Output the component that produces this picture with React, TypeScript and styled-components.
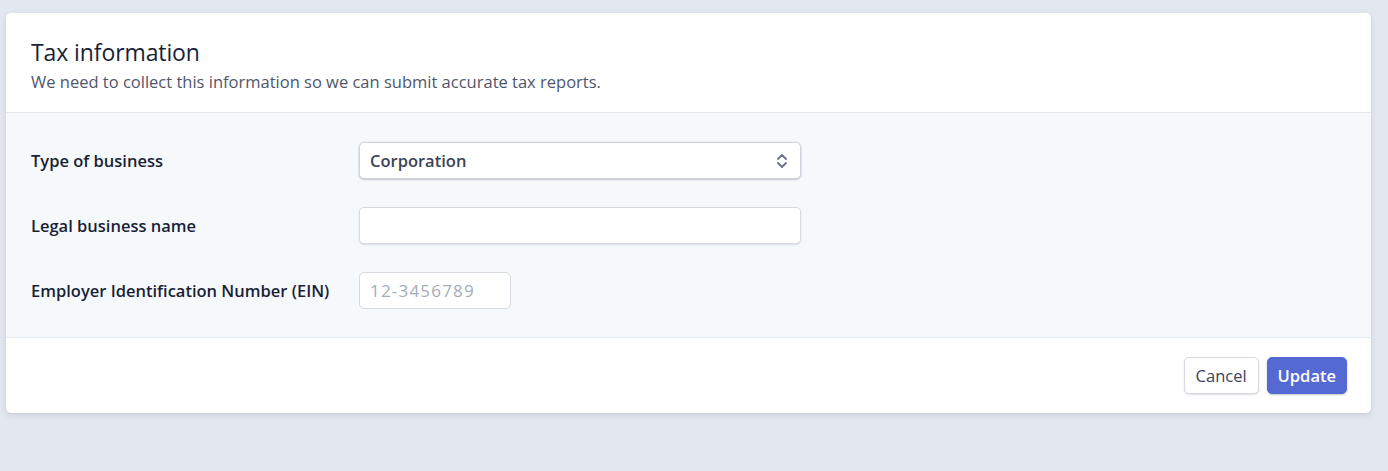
import React from 'react';
import styled, { createGlobalStyle } from 'styled-components';

const GlobalStyle = createGlobalStyle`
  html, body {
    margin: 0;
    padding: 0;
    background: #e3e7ef;
    font-family: "Open Sans", "Noto Sans", sans-serif;
    color: #1a1f36;
  }
`;

const Page = styled.div`
  padding: 13px 17px 58px 6px;
`;

const Card = styled.div`
  background: #ffffff;
  border-radius: 5px;
  box-shadow: 0 2px 6px rgba(60, 66, 87, 0.12), 0 1px 2px rgba(0, 0, 0, 0.06);
  overflow: hidden;
`;

const Header = styled.div`
  padding: 23px 25px 18px;
  border-bottom: 1px solid #e3e8ee;
`;

const Title = styled.h1`
  margin: 0;
  font-size: 23px;
  font-weight: 400;
  line-height: 32px;
  color: #1a1f36;
  letter-spacing: -0.1px;
`;

const Subtitle = styled.p`
  margin: 2px 0 0;
  font-size: 16.5px;
  line-height: 24px;
  color: #4f566b;
`;

const Body = styled.div`
  background: #f6f9fc;
  padding: 29px 25px 28px;
  display: flex;
  flex-direction: column;
  gap: 28px;
  border-bottom: 1px solid #e3e8ee;
`;

const Row = styled.div`
  display: grid;
  grid-template-columns: 328px 1fr;
  align-items: center;
`;

const Label = styled.label`
  font-size: 16.5px;
  font-weight: 600;
  color: #1a1f36;
`;

const Field = styled.div<{ $width: number }>`
  position: relative;
  width: ${p => p.$width}px;
  height: 37px;
  box-sizing: border-box;
  background: #ffffff;
  border: 1px solid #d5d9e0;
  border-radius: 5px;
  box-shadow: ${p => (p.$width > 400 ? '0 1px 2px rgba(60, 66, 87, 0.16)' : 'none')};
  display: flex;
  align-items: center;
`;

const SelectField = styled(Field)`
  box-shadow: 0 1px 2px rgba(60, 66, 87, 0.25), 0 0 0 1px rgba(60, 66, 87, 0.04);
  border-color: #cfd4dc;
`;

const Value = styled.span`
  padding-left: 10px;
  font-size: 16.5px;
  font-weight: 600;
  color: #3c4257;
  flex: 1;
`;

const TextInput = styled.input`
  border: none;
  outline: none;
  background: transparent;
  width: 100%;
  height: 100%;
  box-sizing: border-box;
  padding: 0 10px;
  font-family: inherit;
  font-size: 16.5px;
  color: #3c4257;
  &::placeholder {
    color: #a3acb9;
    font-size: 17px;
    letter-spacing: 1.2px;
  }
`;

const Chevrons = styled.svg`
  position: absolute;
  right: 11px;
  top: 10px;
`;

const Footer = styled.div`
  display: flex;
  justify-content: flex-end;
  gap: 8px;
  padding: 19px 24px 19px;
`;

const Button = styled.button<{ $primary?: boolean }>`
  height: 37px;
  padding: 0 ${p => (p.$primary ? 10 : 11)}px;
  border-radius: 5px;
  font-family: inherit;
  font-size: 16.5px;
  font-weight: ${p => (p.$primary ? 600 : 500)};
  cursor: pointer;
  border: 1px solid ${p => (p.$primary ? '#5469d4' : '#d5d9e0')};
  background: ${p => (p.$primary ? '#5469d4' : '#ffffff')};
  color: ${p => (p.$primary ? '#ffffff' : '#3c4257')};
  box-shadow: ${p =>
    p.$primary ? '0 1px 2px rgba(60, 66, 87, 0.3)' : '0 1px 2px rgba(60, 66, 87, 0.16)'};
`;

const App: React.FC = () => {
  return (
    <>
      <GlobalStyle />
      <Page>
        <Card>
          <Header>
            <Title>Tax information</Title>
            <Subtitle>We need to collect this information so we can submit accurate tax reports.</Subtitle>
          </Header>
          <Body>
            <Row>
              <Label>Type of business</Label>
              <SelectField $width={442}>
                <Value>Corporation</Value>
                <Chevrons width="14" height="16" viewBox="0 0 14 16" fill="none">
                  <path d="M3 6l4-4 4 4M3 10l4 4 4-4" stroke="#697386" strokeWidth="1.8" strokeLinecap="round" strokeLinejoin="round" />
                </Chevrons>
              </SelectField>
            </Row>
            <Row>
              <Label>Legal business name</Label>
              <Field $width={442}>
                <TextInput type="text" />
              </Field>
            </Row>
            <Row>
              <Label>Employer Identification Number (EIN)</Label>
              <Field $width={152}>
                <TextInput type="text" placeholder="12-3456789" />
              </Field>
            </Row>
          </Body>
          <Footer>
            <Button>Cancel</Button>
            <Button $primary>Update</Button>
          </Footer>
        </Card>
      </Page>
    </>
  );
};

export default App;
